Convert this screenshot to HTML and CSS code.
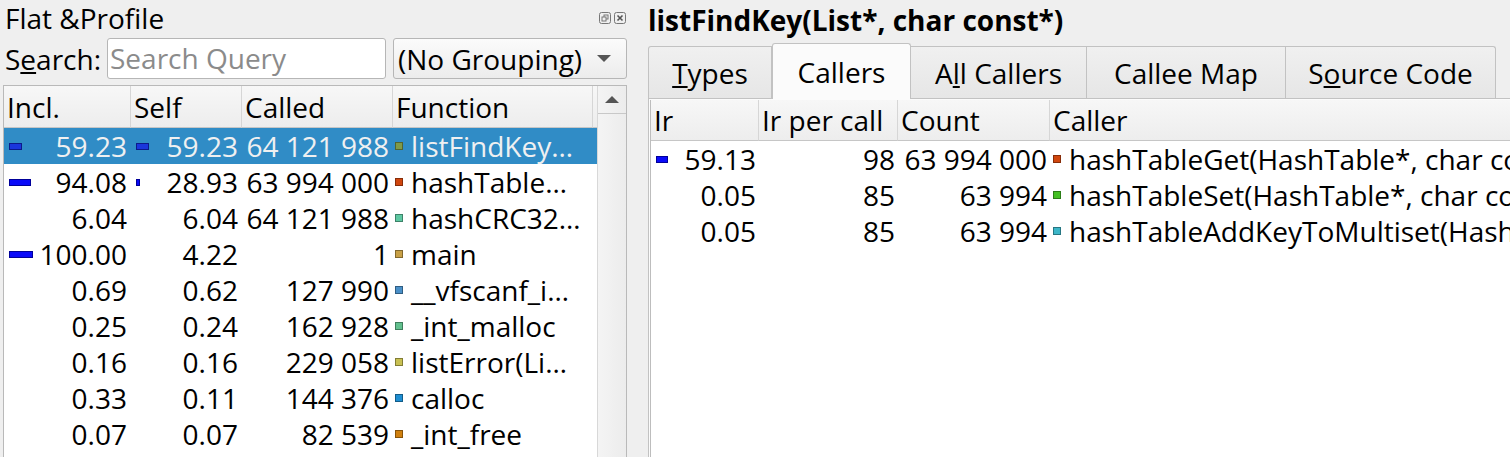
FILE: index.html
```html
<!DOCTYPE html>
<html>
<head>
<meta charset="utf-8">
<link rel="stylesheet" href="styles.css">
</head>
<body>
<div class="app">
  <section class="dock">
    <div class="dock-title">
      <span class="dock-name">Flat &amp;Profile</span>
      <span class="dock-btns">
        <svg width="12" height="12" viewBox="0 0 12 12"><rect x="0.5" y="0.5" width="11" height="11" rx="2" fill="none" stroke="#777"/><rect x="5" y="3" width="4" height="4" fill="none" stroke="#777"/><rect x="3" y="5" width="4" height="4" fill="#efefef" stroke="#777"/></svg>
        <svg width="12" height="12" viewBox="0 0 12 12"><rect x="0.5" y="0.5" width="11" height="11" rx="2" fill="none" stroke="#777"/><path d="M3.5 3.5 L8.5 8.5 M8.5 3.5 L3.5 8.5" stroke="#555" stroke-width="1.6"/></svg>
      </span>
    </div>
    <div class="search-row">
      <span class="search-label">S<u>e</u>arch:</span>
      <div class="input">Search Query</div>
      <div class="combo"><span>(No Grouping)</span><span class="arrow"></span></div>
    </div>
    <div class="tframe">
      <div class="ltable">
        <div class="hcell">Incl.</div><div class="hcell">Self</div><div class="hcell">Called</div><div class="hcell">Function</div><div class="hcell hfill"></div>

        <div class="row sel">
          <div class="cell num"><span class="bar" style="width:13px"></span>59.23</div>
          <div class="cell num"><span class="bar" style="width:13px"></span>59.23</div>
          <div class="cell num">64 121 988</div>
          <div class="cell fn"><span class="sq" style="background:#7f9a48"></span>listFindKey…</div>
        </div>
        <div class="row">
          <div class="cell num"><span class="bar" style="width:22px"></span>94.08</div>
          <div class="cell num"><span class="bar" style="width:4px"></span>28.93</div>
          <div class="cell num">63 994 000</div>
          <div class="cell fn"><span class="sq" style="background:#d0460e"></span>hashTable…</div>
        </div>
        <div class="row">
          <div class="cell num">6.04</div>
          <div class="cell num">6.04</div>
          <div class="cell num">64 121 988</div>
          <div class="cell fn"><span class="sq" style="background:#5ec8a2"></span>hashCRC32…</div>
        </div>
        <div class="row">
          <div class="cell num"><span class="bar" style="width:24px"></span>100.00</div>
          <div class="cell num">4.22</div>
          <div class="cell num">1</div>
          <div class="cell fn"><span class="sq" style="background:#c8a046"></span>main</div>
        </div>
        <div class="row">
          <div class="cell num">0.69</div>
          <div class="cell num">0.62</div>
          <div class="cell num">127 990</div>
          <div class="cell fn"><span class="sq" style="background:#4a90c8"></span>__vfscanf_i…</div>
        </div>
        <div class="row">
          <div class="cell num">0.25</div>
          <div class="cell num">0.24</div>
          <div class="cell num">162 928</div>
          <div class="cell fn"><span class="sq" style="background:#62c08e"></span>_int_malloc</div>
        </div>
        <div class="row">
          <div class="cell num">0.16</div>
          <div class="cell num">0.16</div>
          <div class="cell num">229 058</div>
          <div class="cell fn"><span class="sq" style="background:#c8c052"></span>listError(Li…</div>
        </div>
        <div class="row">
          <div class="cell num">0.33</div>
          <div class="cell num">0.11</div>
          <div class="cell num">144 376</div>
          <div class="cell fn"><span class="sq" style="background:#1e8ed2"></span>calloc</div>
        </div>
        <div class="row">
          <div class="cell num">0.07</div>
          <div class="cell num">0.07</div>
          <div class="cell num">82 539</div>
          <div class="cell fn"><span class="sq" style="background:#d0800e"></span>_int_free</div>
        </div>
      </div>
      <div class="vscroll">
        <div class="sb-up"><span class="up-tri"></span></div>
        <div class="sb-track"></div>
      </div>
    </div>
  </section>

  <section class="main">
    <h1 class="fn-title">listFindKey(List*, char const*)</h1>
    <div class="tabbar">
      <div class="tab tab-types"><u>T</u>ypes</div>
      <div class="tab tab-callers active">Callers</div>
      <div class="tab tab-all">A<u>l</u>l Callers</div>
      <div class="tab tab-map">Callee Map</div>
      <div class="tab tab-src">S<u>o</u>urce Code</div>
    </div>
    <div class="pane">
      <div class="rtable">
        <div class="hcell">Ir</div><div class="hcell">Ir per call</div><div class="hcell">Count</div><div class="hcell hlast">Caller</div>

        <div class="row">
          <div class="cell num"><span class="bar" style="width:12px"></span>59.13</div>
          <div class="cell num">98</div>
          <div class="cell num">63 994 000</div>
          <div class="cell fn"><span class="sq" style="background:#d0460e"></span>hashTableGet(HashTable*, char const*)</div>
        </div>
        <div class="row">
          <div class="cell num">0.05</div>
          <div class="cell num">85</div>
          <div class="cell num">63 994</div>
          <div class="cell fn"><span class="sq" style="background:#44c024"></span>hashTableSet(HashTable*, char const*, int)</div>
        </div>
        <div class="row">
          <div class="cell num">0.05</div>
          <div class="cell num">85</div>
          <div class="cell num">63 994</div>
          <div class="cell fn"><span class="sq" style="background:#3cb6c8"></span>hashTableAddKeyToMultiset(HashTable*, char const*)</div>
        </div>
      </div>
    </div>
  </section>
</div>
</body>
</html>
```

FILE: styles.css
```css
html, body {
  margin: 0;
  padding: 0;
  height: 100%;
  overflow: hidden;
}
body {
  background: #efefef;
  font-family: "Open Sans", "Noto Sans", sans-serif;
  font-size: 28px;
  color: #000;
}
.app {
  display: flex;
  height: 457px;
  width: 1510px;
  overflow: hidden;
}

/* ---------- left dock ---------- */
.dock {
  width: 624px;
  flex: none;
  display: flex;
  flex-direction: column;
  padding-left: 3px;
}
.dock-title {
  height: 36px;
  display: flex;
  align-items: center;
  justify-content: space-between;
  padding-left: 2px;
}
.dock-name {
  line-height: 36px;
  white-space: nowrap;
}
.dock-btns {
  display: flex;
  gap: 3px;
  padding-right: 1px;
}
.dock-btns svg { display: block; }

.search-row {
  display: flex;
  align-items: center;
  height: 41px;
  margin-top: 2px;
}
.search-label {
  padding-left: 2px;
  width: 102px;
  flex: none;
  white-space: nowrap;
}
.input {
  width: 279px;
  height: 41px;
  box-sizing: border-box;
  border: 1px solid #b6b6b6;
  border-radius: 3px;
  background: #fff;
  color: #8b8b8b;
  padding-left: 2px;
  line-height: 39px;
  flex: none;
  white-space: nowrap;
  overflow: hidden;
}
.combo {
  margin-left: 7px;
  flex: 1;
  height: 41px;
  box-sizing: border-box;
  border: 1px solid #b6b6b6;
  border-radius: 3px;
  background: linear-gradient(#fbfbfb, #ececec);
  display: flex;
  align-items: center;
  justify-content: space-between;
  padding: 0 15px 0 4px;
  white-space: nowrap;
}
.arrow {
  width: 0;
  height: 0;
  border-left: 7px solid transparent;
  border-right: 7px solid transparent;
  border-top: 7px solid #555;
}

.tframe {
  margin-top: 6px;
  flex: 1;
  display: flex;
  border: 1px solid #b9b9b9;
  border-bottom: none;
  background: #fff;
  min-height: 0;
}
.ltable {
  width: 593px;
  flex: none;
  display: grid;
  grid-template-columns: 127px 111px 151px 200px 1fr;
  grid-template-rows: 42px;
  grid-auto-rows: 36px;
  align-content: start;
  border-right: 1px solid #d8d8d8;
}
.hcell {
  height: 42px;
  box-sizing: border-box;
  background: linear-gradient(#f7f7f7, #ededed);
  border-right: 1px solid #d6d6d6;
  border-bottom: 1px solid #c6c6c6;
  padding-left: 3px;
  display: flex;
  align-items: center;
  white-space: nowrap;
  overflow: hidden;
}
.hfill { border-right: none; padding: 0; }

.row { display: contents; }
.cell {
  height: 36px;
  display: flex;
  align-items: center;
  white-space: nowrap;
  overflow: hidden;
}
.ltable .row .cell:last-child { grid-column: span 2; }
.num {
  justify-content: flex-end;
  padding-right: 4px;
  position: relative;
}
.bar {
  position: absolute;
  left: 5px;
  top: 15px;
  height: 7px;
  box-sizing: border-box;
  background: #0a0af8;
  border: 1px solid #00009a;
}
.fn { padding-left: 2px; }
.sq {
  width: 8px;
  height: 8px;
  box-sizing: border-box;
  border: 1px solid rgba(0,0,0,0.35);
  flex: none;
  margin-right: 8px;
}
.sel .cell {
  background: #308cc6;
  color: #eff0f1;
}
.sel .bar { background: #1a36dc; border-color: #0c1a8a; }

.vscroll {
  flex: 1;
  display: flex;
  flex-direction: column;
  background: linear-gradient(90deg, #f4f4f4, #ececec);
}
.sb-up {
  height: 27px;
  border-bottom: 1px solid #c8c8c8;
  display: flex;
  justify-content: center;
  align-items: center;
}
.up-tri {
  width: 0;
  height: 0;
  border-left: 7px solid transparent;
  border-right: 7px solid transparent;
  border-bottom: 7px solid #555;
}

/* ---------- main ---------- */
.main {
  flex: 1;
  padding-left: 21px;
  display: flex;
  flex-direction: column;
  min-width: 0;
}
.fn-title {
  margin: 0;
  font-size: 28px;
  font-weight: bold;
  height: 40px;
  line-height: 40px;
  white-space: nowrap;
}
.tabbar {
  display: flex;
  align-items: flex-end;
  height: 58px;
}
.tab {
  height: 52px;
  box-sizing: border-box;
  border: 1px solid #c2c2c2;
  border-bottom: none;
  border-left: none;
  background: linear-gradient(#f0f0f0, #e6e6e6);
  display: flex;
  align-items: center;
  justify-content: center;
  white-space: nowrap;
}
.tab-types { width: 124px; }
.tab-callers { width: 139px; }
.tab-all { width: 176px; }
.tab-map { width: 199px; }
.tab-src { width: 210px; }
.tab:first-child { border-left: 1px solid #c2c2c2; border-radius: 3px 0 0 0; }
.tab:last-child { border-radius: 0 3px 0 0; }
.tab.active {
  height: 56px;
  background: #fbfbfb;
  border-left: 1px solid #c2c2c2;
  border-radius: 3px 3px 0 0;
  margin-bottom: -1px;
  position: relative;
  z-index: 1;
}

.pane {
  flex: 1;
  border-top: 1px solid #c2c2c2;
  border-left: 1px solid #c2c2c2;
  background: #fbfbfb;
  padding: 1px 0 0 1px;
  min-height: 0;
}
.rtable {
  height: 100%;
  background: #fff;
  border-left: 1px solid #bdbdbd;
  display: grid;
  grid-template-columns: 108px 139px 152px 1fr;
  grid-template-rows: 41px;
  grid-auto-rows: 36px;
  align-content: start;
}
.rtable .hcell { height: 41px; }
.rtable .hlast { border-right: none; }
.rtable .num { padding-right: 3px; }
.rtable .fn { padding-left: 3px; }
```
